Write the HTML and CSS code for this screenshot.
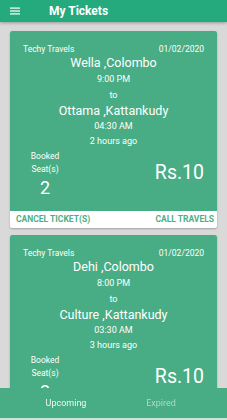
FILE: index.html
```html
<!DOCTYPE html>
<html>
<head>
<meta charset="utf-8">
<link rel="stylesheet" href="styles.css">
</head>
<body>
<header class="appbar">
  <svg class="menu" width="10" height="8" viewBox="0 0 10 8"><rect x="0" y="0.5" width="10" height="1.2" fill="#fff"/><rect x="0" y="3.4" width="10" height="1.2" fill="#fff"/><rect x="0" y="6.3" width="10" height="1.2" fill="#fff"/></svg>
  <span class="title">My Tickets</span>
</header>
<main class="list">
  <div class="card">
    <div class="body">
      <div class="top"><span>Techy Travels</span><span>01/02/2020</span></div>
      <div class="place">Wella ,Colombo</div>
      <div class="small">9:00 PM</div>
      <div class="small">to</div>
      <div class="place p2">Ottama ,Kattankudy</div>
      <div class="small t2">04:30 AM</div>
      <div class="small ago">2 hours ago</div>
      <div class="bottom">
        <div class="seats"><div class="lbl">Booked</div><div class="lbl">Seat(s)</div><div class="num">2</div></div>
        <div class="price">Rs.10</div>
      </div>
    </div>
    <div class="actions"><span>CANCEL TICKET(S)</span><span>CALL TRAVELS</span></div>
  </div>
  <div class="card">
    <div class="body">
      <div class="top"><span>Techy Travels</span><span>01/02/2020</span></div>
      <div class="place">Dehi ,Colombo</div>
      <div class="small">8:00 PM</div>
      <div class="small">to</div>
      <div class="place p2">Culture ,Kattankudy</div>
      <div class="small t2">03:30 AM</div>
      <div class="small ago">3 hours ago</div>
      <div class="bottom">
        <div class="seats"><div class="lbl">Booked</div><div class="lbl">Seat(s)</div><div class="num">2</div></div>
        <div class="price">Rs.10</div>
      </div>
    </div>
    <div class="actions"><span>CANCEL TICKET(S)</span><span>CALL TRAVELS</span></div>
  </div>
</main>
<nav class="tabs">
  <span class="tab active">Upcoming</span>
  <span class="tab">Expired</span>
</nav>
</body>
</html>
```
FILE: styles.css
```css
html, body { margin: 0; padding: 0; }
body {
  background: #d9d9d9;
  font-family: Roboto, "Liberation Sans", sans-serif;
  color: #fff;
  width: 227px;
  height: 420px;
  overflow: hidden;
}
.appbar {
  height: 22px;
  background: #24aa7c;
  display: flex;
  align-items: center;
  box-shadow: 0 1px 3px rgba(0,0,0,0.3);
  position: relative;
  z-index: 2;
}
.menu { margin-left: 10px; margin-right: 29px; }
.title { font-size: 12px; font-weight: 700; color: #fff; }
.list { padding: 9px 10px 0 10px; display: flex; flex-direction: column; gap: 7px; }
.card {
  background: #fff;
  border-radius: 2px;
  box-shadow: 0 1px 2px rgba(0,0,0,0.25);
  overflow: hidden;
}
.body {
  background: #48ad84;
  padding: 12px 13px 11px 13px;
  text-align: center;
}
.top { display: flex; justify-content: space-between; font-size: 8.5px; line-height: 12px; }
.place { font-size: 12.5px; line-height: 16px; }
.place.p2 { line-height: 15px; }
.small { font-size: 9px; line-height: 16px; }
.small.t2 { line-height: 16px; }
.small.ago { line-height: 14px; }
.bottom { display: flex; justify-content: space-between; align-items: center; margin-top: 2px; }
.seats { width: 44px; }
.lbl { font-size: 8.5px; line-height: 13px; }
.num { font-size: 18px; line-height: 24px; }
.price { font-size: 19.5px; line-height: 24px; margin-bottom: 5px; }
.actions {
  display: flex;
  justify-content: space-between;
  padding: 0 3px 0 6px;
  height: 17px;
  line-height: 17px;
  font-size: 8.5px;
  font-weight: 700;
  color: #4caf86;
}
.tabs {
  position: fixed;
  left: 0;
  right: 0;
  bottom: 2px;
  height: 30px;
  background: #48ad84;
  display: flex;
  justify-content: center;
  align-items: center;
  box-shadow: 0 2px 0 #c9e6d9;
}
.tab { width: 95px; text-align: center; font-size: 9px; color: #a9dbc3; }
.tab.active { color: #eef8f3; }
```
